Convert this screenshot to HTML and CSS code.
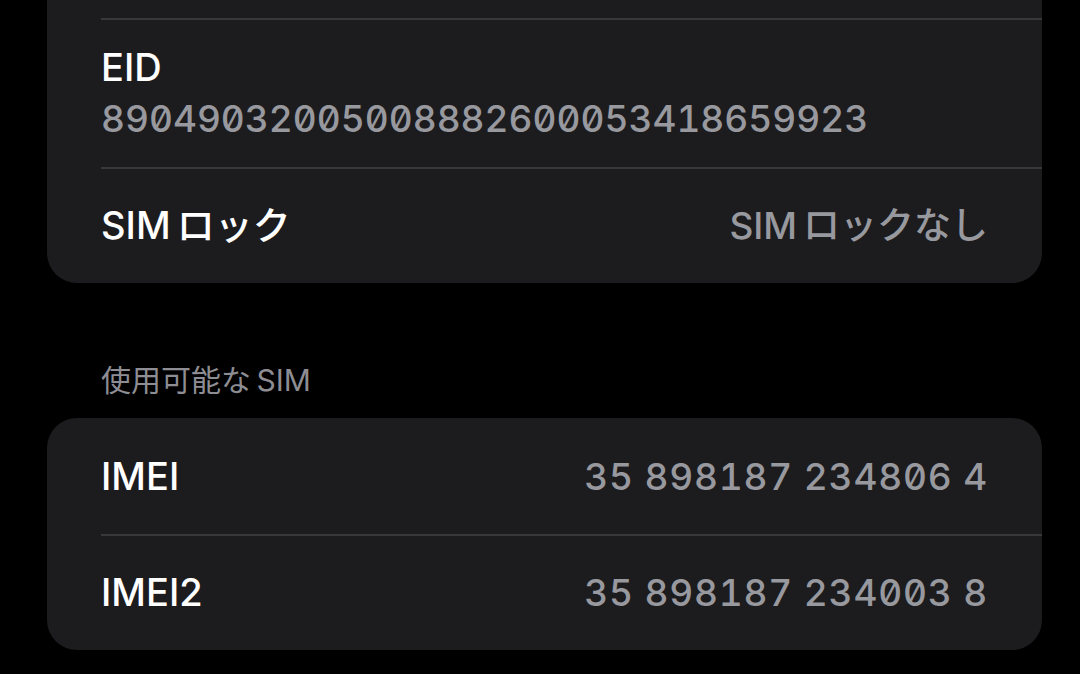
FILE: index.html
```html
<!DOCTYPE html>
<html lang="ja">
<head>
<meta charset="utf-8">
<title>SIM</title>
<link rel="stylesheet" href="styles.css">
</head>
<body>
<main class="page">
  <section class="group group-first">
    <div class="row row-hidden"></div>
    <div class="row row-stack">
      <div class="label">EID</div>
      <div class="num eid">89049032005008882600053418659923</div>
    </div>
    <div class="row">
      <div class="label">SIM ロック</div>
      <div class="value">SIM ロックなし</div>
    </div>
  </section>

  <h2 class="group-header">使用可能な SIM</h2>

  <section class="group">
    <div class="row">
      <div class="label">IMEI</div>
      <div class="num imei">35 898187 234806 4</div>
    </div>
    <div class="row">
      <div class="label">IMEI2</div>
      <div class="num imei">35 898187 234003 8</div>
    </div>
  </section>
</main>
</body>
</html>
```

FILE: styles.css
```css
html, body {
  margin: 0;
  padding: 0;
  background: #000;
  height: 100%;
  overflow: hidden;
}

body {
  font-family: Inter, "Noto Sans CJK JP", sans-serif;
  color: #fff;
}

.page {
  padding: 0 38px 0 47px;
}

.group {
  background: #1c1c1e;
  border-radius: 30px;
  overflow: hidden;
}

.group-first {
  margin-top: -60px;
}

.row {
  position: relative;
  display: flex;
  align-items: center;
  justify-content: space-between;
  min-height: 116px;
  padding: 0 54px;
  box-sizing: border-box;
}

.row + .row::before {
  content: "";
  position: absolute;
  top: 0;
  left: 54px;
  right: 0;
  height: 2px;
  background: #38383a;
}

.row-hidden {
  min-height: 78px;
}

.row-stack {
  flex-direction: column;
  align-items: flex-start;
  justify-content: flex-start;
  min-height: 149px;
  padding-top: 28px;
  gap: 8px;
}

.label {
  font-size: 38px;
  line-height: 43px;
  font-weight: 500;
  color: #fff;
  word-spacing: -4px;
}

.value {
  font-size: 37px;
  line-height: 43px;
  font-weight: 500;
  color: #98989f;
  word-spacing: -4px;
}

.num {
  font-family: Inter, sans-serif;
  font-feature-settings: "tnum" 1, "zero" 1;
  font-variant-numeric: tabular-nums slashed-zero;
  font-size: 37px;
  line-height: 43px;
  font-weight: 500;
  color: #98989f;
}

.eid {
  letter-spacing: 0;
}

.imei {
  letter-spacing: 0.8px;
}

.group-header {
  margin: 0;
  padding: 79px 0 20px 54px;
  font-size: 30px;
  line-height: 36px;
  font-weight: 400;
  color: #8d8d93;
  word-spacing: -3px;
}
```
